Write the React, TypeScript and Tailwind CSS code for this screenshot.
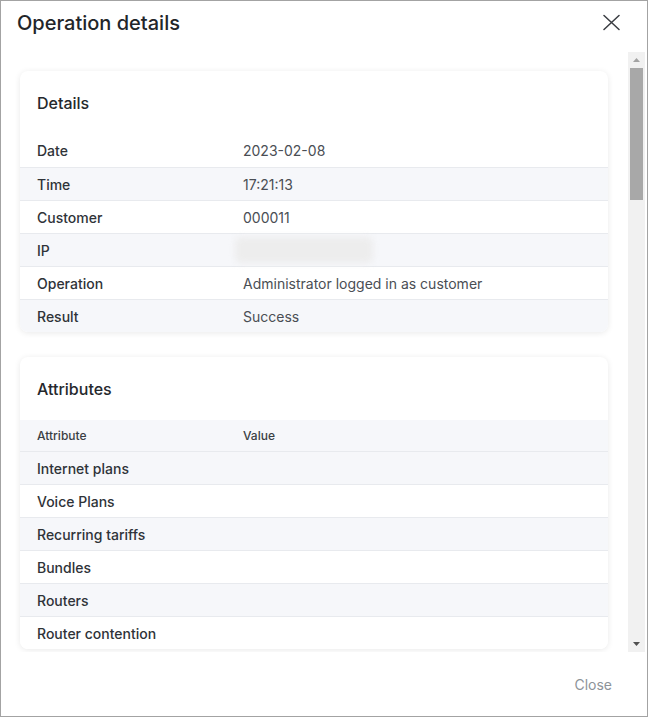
import { ReactNode } from "react";

const details: [string, ReactNode][] = [
  ["Date", "2023-02-08"],
  ["Time", "17:21:13"],
  ["Customer", "000011"],
  ["IP", <div className="ml-[-8px] h-[26px] w-[138px] rounded-md bg-[#ededed] blur-[3px]" />],
  ["Operation", "Administrator logged in as customer"],
  ["Result", "Success"],
];

const attributes = [
  "Internet plans",
  "Voice Plans",
  "Recurring tariffs",
  "Bundles",
  "Routers",
  "Router contention",
];

const Row = ({ label, value, index }: { label: string; value?: ReactNode; index: number }) => (
  <div
    className={`flex h-[33px] items-center text-[14px] ${index > 0 ? "border-t border-[#e8eaee]" : ""} ${
      index % 2 === 1 ? "bg-[#f6f7fa]" : "bg-white"
    }`}
  >
    <div className="w-[223px] pl-[17px] font-medium text-[#2f3338]">{label}</div>
    <div className="flex-1 text-[#4a4e54]">{value}</div>
  </div>
);

const Card = ({ title, children }: { title: string; children: ReactNode }) => (
  <div className="shrink-0 overflow-hidden rounded-lg bg-white shadow-[0_1px_6px_rgba(0,0,0,0.09)]">
    <div className="flex h-[63px] items-center pl-[17px] text-[16px] font-medium text-[#25282c]">{title}</div>
    {children}
  </div>
);

export default function App() {
  return (
    <div className="flex h-[717px] w-[648px] flex-col border border-[#a3a3a3] bg-white font-['Inter',sans-serif]">
      <div className="flex h-[43px] items-center justify-between pl-[16px] pr-[27px]">
        <h1 className="text-[20px] font-medium text-[#222529]">Operation details</h1>
        <svg width="17" height="17" viewBox="0 0 17 17" fill="none" stroke="#3a3d42" strokeWidth="1.5" strokeLinecap="round">
          <path d="M1 1.5L16 15.5M16 1.5L1 15.5" />
        </svg>
      </div>

      <div className="mt-[8px] flex h-[600px]">
        <div className="flex w-[627px] flex-col gap-[25px] overflow-hidden pl-[19px] pr-[20px] pt-[19px]">
          <Card title="Details">
            {details.map(([label, value], i) => (
              <Row key={label} label={label} value={value} index={i} />
            ))}
          </Card>
          <Card title="Attributes">
            <div className="flex h-[31px] items-center bg-[#f6f7fa] text-[12px] font-medium text-[#3a3e44]">
              <div className="w-[223px] pl-[17px]">Attribute</div>
              <div className="flex-1">Value</div>
            </div>
            {attributes.map((a, i) => (
              <Row key={a} label={a} index={i + 1} />
            ))}
          </Card>
        </div>

        <div className="flex w-[17px] flex-col bg-[#f1f1f1]">
          <div className="flex h-[16px] items-center justify-center">
            <svg width="7" height="4" viewBox="0 0 7 4">
              <path d="M3.5 0L7 4H0z" fill="#a3a3a3" />
            </svg>
          </div>
          <div className="mx-[2px] h-[132px] bg-[#a8a8a8]" />
          <div className="flex-1" />
          <div className="flex h-[16px] items-center justify-center">
            <svg width="7" height="4" viewBox="0 0 7 4">
              <path d="M0 0H7L3.5 4z" fill="#505050" />
            </svg>
          </div>
        </div>
      </div>

      <div className="flex h-[64px] items-center justify-end pr-[35px]">
        <button className="text-[14px] text-[#8d9399]">Close</button>
      </div>
    </div>
  );
}
